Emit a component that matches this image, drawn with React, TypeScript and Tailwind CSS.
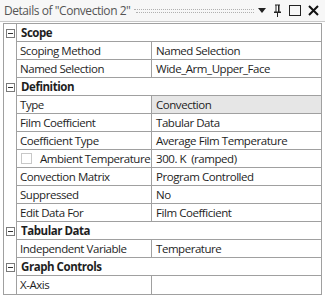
import React from "react";

type Row =
  | { kind: "section"; label: string }
  | { kind: "prop"; label: string; value: string; check?: boolean; shaded?: boolean };

const rows: Row[] = [
  { kind: "section", label: "Scope" },
  { kind: "prop", label: "Scoping Method", value: "Named Selection" },
  { kind: "prop", label: "Named Selection", value: "Wide_Arm_Upper_Face" },
  { kind: "section", label: "Definition" },
  { kind: "prop", label: "Type", value: "Convection", shaded: true },
  { kind: "prop", label: "Film Coefficient", value: "Tabular Data" },
  { kind: "prop", label: "Coefficient Type", value: "Average Film Temperature" },
  { kind: "prop", label: "Ambient Temperature", value: "300. K  (ramped)", check: true },
  { kind: "prop", label: "Convection Matrix", value: "Program Controlled" },
  { kind: "prop", label: "Suppressed", value: "No" },
  { kind: "prop", label: "Edit Data For", value: "Film Coefficient" },
  { kind: "section", label: "Tabular Data" },
  { kind: "prop", label: "Independent Variable", value: "Temperature" },
  { kind: "section", label: "Graph Controls" },
  { kind: "prop", label: "X-Axis", value: "" },
];

const MinusBox = () => (
  <div className="w-[9px] h-[9px] border border-[#7a7a7a] bg-white flex items-center justify-center">
    <div className="w-[5px] h-px bg-[#333]" />
  </div>
);

const PinIcon = () => (
  <svg width="9" height="13" viewBox="0 0 9 13" className="text-[#222]">
    <path d="M2 0.5h5v1H6.5v6H8v1.5H1V7.5h1.5v-6H2z" fill="currentColor" />
    <rect x="3.5" y="1.5" width="1.5" height="6" fill="#fff" />
    <rect x="4" y="9" width="1" height="4" fill="currentColor" />
  </svg>
);

export default function App() {
  return (
    <div className="w-[325px] h-[296px] bg-white font-['Open_Sans',sans-serif] text-[11.5px] tracking-[-0.45px] text-[#1e1e1e] overflow-hidden">
      <div className="h-[22px] flex items-center pl-[4px] pr-[6px] bg-[#f7f7f7] border-b border-[#c8c8c8]">
        <span className="text-[#555] text-[12px] tracking-[-0.45px] whitespace-nowrap">Details of "Convection 2"</span>
        <div className="flex-1 mx-[4px] flex flex-col gap-[2px]">
          <div className="border-t border-dotted border-[#b0b0b0]" />
          <div className="border-t border-dotted border-[#b0b0b0] ml-[2px]" />
        </div>
        <div className="flex items-center gap-[7px]">
          <div className="w-0 h-0 border-l-[4px] border-r-[4px] border-t-[5px] border-l-transparent border-r-transparent border-t-[#222]" />
          <PinIcon />
          <div className="w-[12px] h-[11px] border-[1.5px] border-[#222]" />
          <svg width="11" height="11" viewBox="0 0 11 11">
            <path d="M1 1L10 10M10 1L1 10" stroke="#111" strokeWidth="2" />
          </svg>
        </div>
      </div>
      <div className="ml-[3px] mt-px w-[319px] border border-[#a0a0a0] flex flex-col">
        {rows.map((r, i) => (
          <div key={i} className="h-[18px] flex">
            <div className="w-[12px] flex items-center justify-center pl-[1px]">
              {r.kind === "section" && <MinusBox />}
            </div>
            {r.kind === "section" ? (
              <div
                className={`flex-1 border-l border-[#a0a0a0] pl-[4px] flex items-center font-bold ${
                  i < rows.length - 1 ? "border-b" : ""
                }`}
              >
                {r.label}
              </div>
            ) : (
              <div className={`flex-1 flex border-l border-[#a0a0a0] ${i < rows.length - 1 ? "border-b" : ""}`}>
                <div className="w-[135px] shrink-0 border-r border-[#a0a0a0] pl-[3px] flex items-center whitespace-nowrap">
                  {r.check && (
                    <div className="w-[11px] h-[11px] shrink-0 border border-[#c8c8c8] bg-white mr-[8px] ml-px" />
                  )}
                  {r.label}
                </div>
                <div
                  className={`flex-1 pl-[4px] flex items-center whitespace-pre ${
                    r.shaded ? "bg-[#e6e6e6]" : ""
                  }`}
                >
                  {r.value}
                </div>
              </div>
            )}
          </div>
        ))}
      </div>
    </div>
  );
}
